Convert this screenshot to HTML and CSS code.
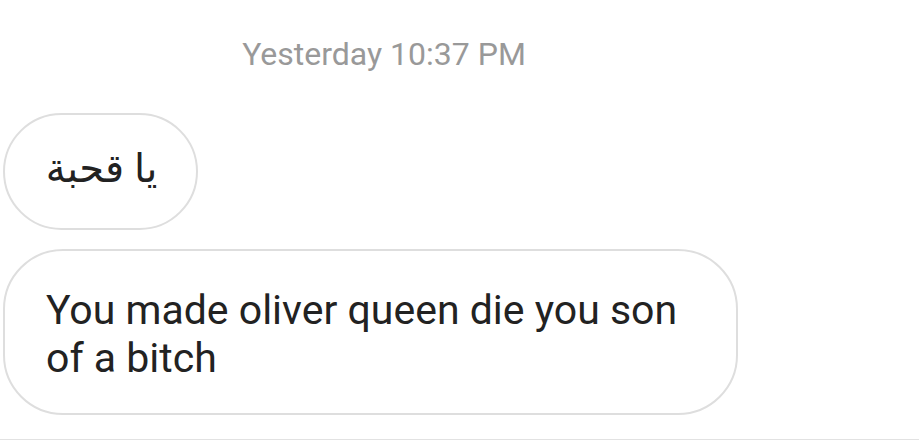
FILE: index.html
```html
<!DOCTYPE html>
<html lang="en">
<head>
    <meta charset="UTF-8">
    <meta name="viewport" content="width=device-width, initial-scale=1.0">
    <title>Messages</title>
    <link rel="stylesheet" href="styles.css">
</head>
<body>
    <div class="thread">
        <div class="timestamp">Yesterday 10:37 PM</div>

        <div class="messages">
            <div class="bubble bubble-short" dir="rtl">يا قحبة</div>
            <div class="bubble bubble-long">You made oliver queen die you son of a bitch</div>
        </div>

        <div class="divider"></div>
    </div>
</body>
</html>
```

FILE: styles.css
```css
body {
    margin: 0;
    background: #fff;
    font-family: Roboto, "DejaVu Sans", sans-serif;
    color: #222;
}
.thread {
    width: 919px;
    height: 440px;
    overflow: hidden;
}
.timestamp {
    width: 768px;
    text-align: center;
    color: #999;
    font-size: 32px;
    line-height: 38px;
    padding-top: 35px;
}
.messages {
    display: flex;
    flex-direction: column;
    align-items: flex-start;
    gap: 19px;
    margin-top: 40px;
    padding-left: 3px;
}
.bubble {
    border: 2px solid #dedede;
    border-radius: 60px;
    box-sizing: border-box;
}
.bubble-short {
    width: 195px;
    height: 117px;
    display: flex;
    align-items: center;
    justify-content: center;
    font-size: 40px;
    padding-left: 2px;
    padding-bottom: 6px;
}
.bubble-long {
    width: 735px;
    height: 166px;
    padding: 35px 40px 0 41px;
    font-size: 41px;
    line-height: 48px;
}
.divider {
    margin-top: 24px;
    height: 1px;
    background: #e2e2e2;
}
```
